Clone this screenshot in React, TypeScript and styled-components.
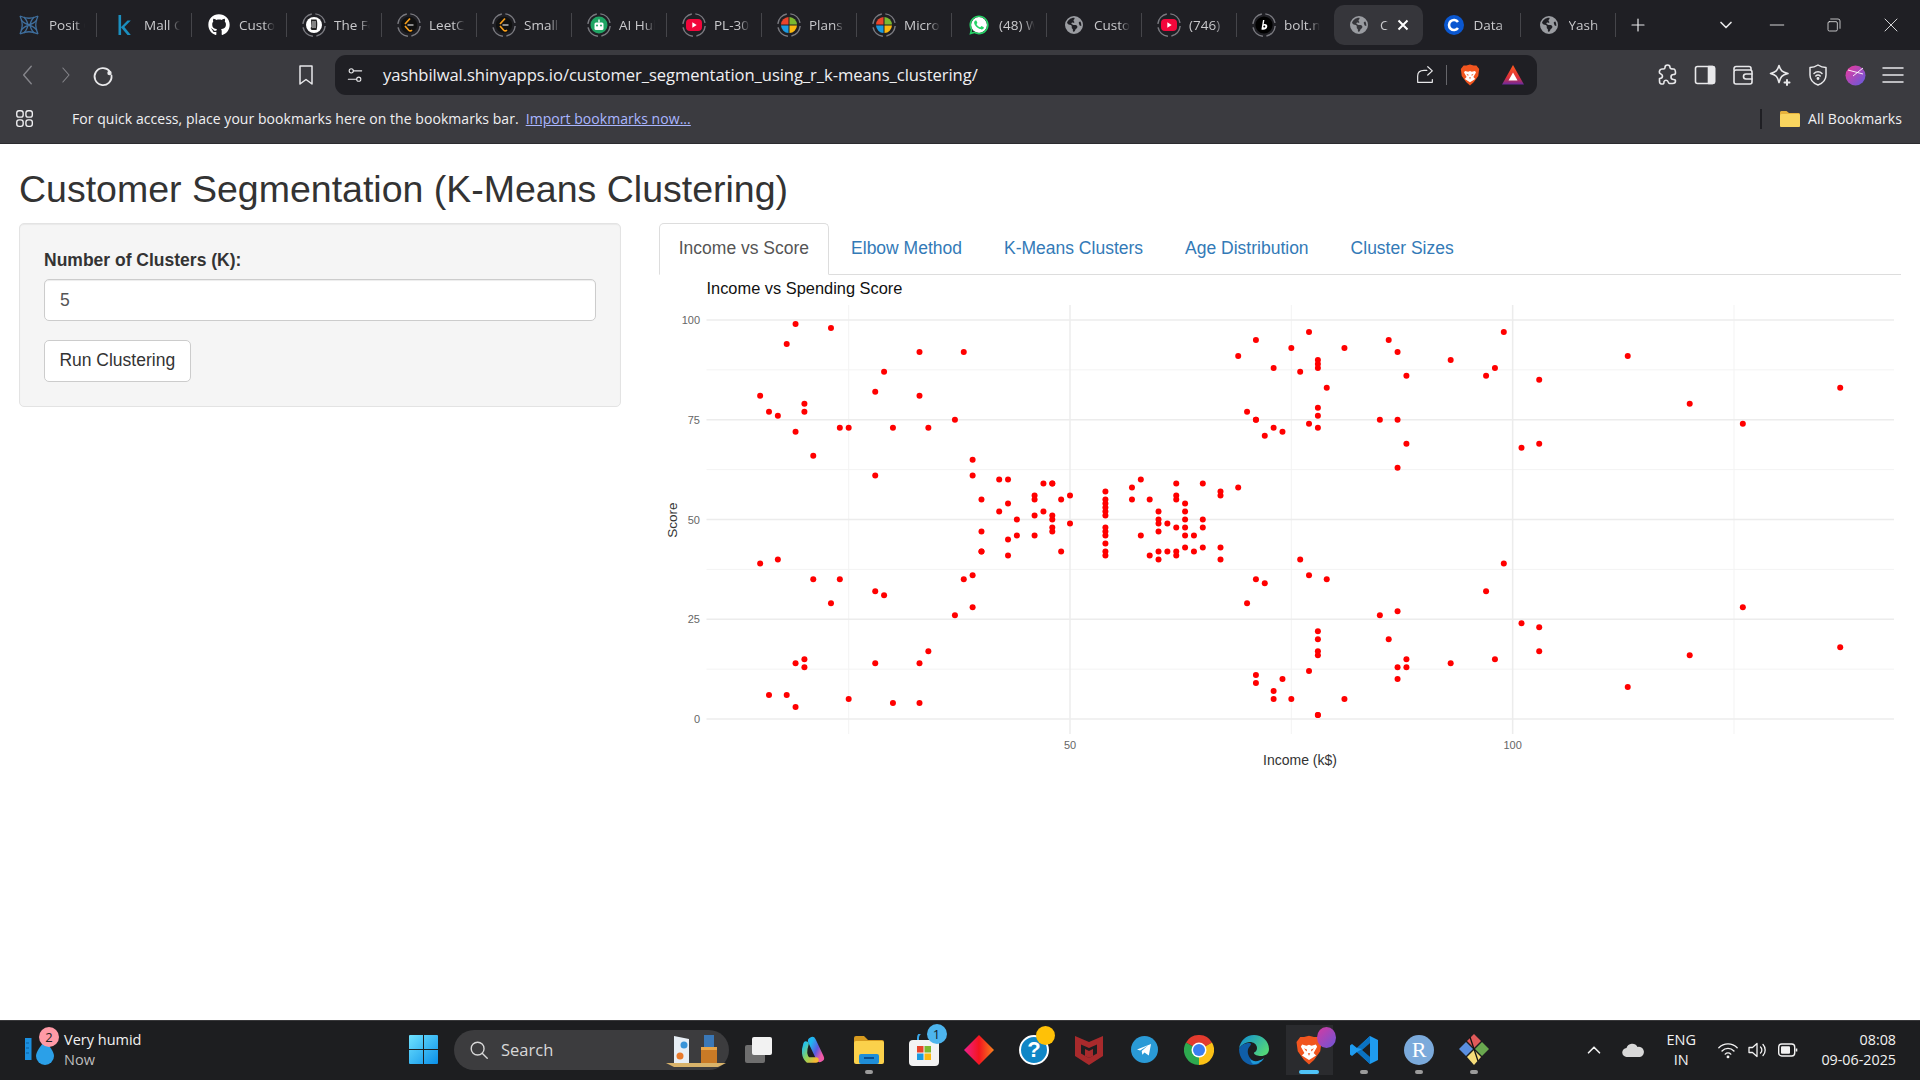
import React from 'react';
import styled, { createGlobalStyle } from 'styled-components';
import { FaGithub } from 'react-icons/fa';
import { FaEarthAmericas } from 'react-icons/fa6';

const GlobalStyle = createGlobalStyle`
  html, body { margin: 0; padding: 0; background: #fff; }
  * { box-sizing: border-box; }
`;

const UI_FONT = `"Open Sans", "Noto Sans", sans-serif`;
const PAGE_FONT = `"Liberation Sans", Arial, sans-serif`;

const Screen = styled.div`
  width: 1920px;
  height: 1080px;
  display: flex;
  flex-direction: column;
  overflow: hidden;
  font-family: ${PAGE_FONT};
`;

/* ---- browser chrome ---- */

const TabStrip = styled.div`
  height: 50px;
  flex: none;
  display: flex;
  align-items: center;
  padding-left: 1.5px;
  background: #1f1f24;
  font-family: ${UI_FONT};
  font-size: 13.5px;
  color: #c9c9cc;
`;

const Tab = styled.div<{ $noSep?: boolean }>`
  width: 95px;
  height: 24px;
  flex: none;
  display: flex;
  align-items: center;
  gap: 8px;
  padding-left: 15.5px;
  border-right: 1px solid ${(p) => (p.$noSep ? 'transparent' : '#45454a')};
`;

const ActiveTab = styled.div`
  width: 89px;
  height: 40px;
  flex: none;
  display: flex;
  align-items: center;
  gap: 9px;
  margin: 0 3px 0 2.5px;
  padding-left: 13px;
  border-radius: 10px;
  background: #36363b;
`;

const TabTitle = styled.span<{ $width?: number }>`
  width: ${(p) => p.$width ?? 36}px;
  overflow: hidden;
  white-space: nowrap;
  -webkit-mask-image: linear-gradient(to right, #000 70%, transparent 100%);
  mask-image: linear-gradient(to right, #000 70%, transparent 100%);
`;

const Fav = styled.span`
  width: 24px;
  height: 24px;
  flex: none;
  display: flex;
  align-items: center;
  justify-content: center;
`;

const StripControls = styled.div`
  flex: 1;
  display: flex;
  align-items: center;
  color: #e8e8ea;
`;

const PlusSlot = styled.div`
  width: 44px;
  display: flex;
  justify-content: center;
`;

const ChevronSlot = styled.div`
  margin-left: 44px;
  width: 44px;
  display: flex;
  justify-content: center;
`;

const WinButton = styled.div`
  width: 57px;
  display: flex;
  justify-content: center;
`;

const Toolbar = styled.div`
  height: 50px;
  flex: none;
  display: flex;
  align-items: center;
  background: #3b3b40;
  color: #e8e8ea;
`;

const NavGroup = styled.div`
  width: 335px;
  flex: none;
  display: flex;
  align-items: center;
  padding-right: 9px;
`;

const NavIcon = styled.span<{ $w: number; $dim?: boolean }>`
  width: ${(p) => p.$w}px;
  flex: none;
  display: flex;
  justify-content: center;
  color: ${(p) => (p.$dim ? '#85858a' : '#e8e8ea')};
`;

const BookmarkSlot = styled(NavIcon)`
  margin-left: auto;
`;

const AddressBar = styled.div`
  width: 1202px;
  height: 40px;
  flex: none;
  display: flex;
  align-items: center;
  border-radius: 11px;
  background: #1f1f24;
  padding-left: 10px;
`;

const Url = styled.span`
  margin-left: 18px;
  padding-bottom: 2px;
  flex: 1;
  font-family: ${UI_FONT};
  font-size: 16.6px;
  letter-spacing: -0.07px;
  color: #f0f0f2;
  white-space: nowrap;
`;

const AddrSep = styled.span`
  width: 1px;
  height: 20px;
  margin: 0 12px 0 10px;
  background: #66666b;
`;

const BatSlot = styled(NavIcon)`
  margin-left: 8px;
`;

const ToolIcons = styled.div`
  margin-left: 118px;
  display: flex;
  align-items: center;
  gap: 12.5px;
`;

const ToolIcon = styled.span`
  width: 25px;
  height: 25px;
  display: flex;
  align-items: center;
  justify-content: center;
`;

const BookmarksBar = styled.div`
  height: 44px;
  flex: none;
  display: flex;
  align-items: center;
  padding: 0 18px 6px 14px;
  background: #3b3b40;
  border-bottom: 1px solid #2b2b2f;
  font-family: ${UI_FONT};
  font-size: 14px;
  letter-spacing: 0.05px;
  color: #f0f0f2;
`;

const BookmarkHint = styled.span`
  margin-left: 36px;
`;

const ImportLink = styled.a`
  margin-left: 7px;
  color: #aab6ff;
  text-decoration: underline;
`;

const AllBookmarks = styled.div`
  margin-left: auto;
  display: flex;
  align-items: center;
  gap: 8px;
`;

const BarDivider = styled.span`
  width: 2px;
  height: 20px;
  margin-right: 10px;
  background: #1f1f24;
`;

/* ---- shiny page ---- */

const Page = styled.main`
  flex: 1;
  padding: 0 19px;
  background: #fff;
  color: #333;
  font-size: 17.5px;
  line-height: 25px;
`;

const Heading = styled.h2`
  margin: 25px 0 12.5px;
  font-size: 37.5px;
  font-weight: 500;
  line-height: 41.25px;
`;

const Columns = styled.div`
  display: grid;
  grid-template-columns: 602px 1242px;
  column-gap: 38px;
`;

const Well = styled.div`
  align-self: start;
  padding: 24px;
  background: #f5f5f5;
  border: 1px solid #e3e3e3;
  border-radius: 5px;
  box-shadow: inset 0 1px 1px rgba(0, 0, 0, 0.05);
`;

const FieldLabel = styled.label`
  display: block;
  margin-bottom: 6px;
  font-weight: 700;
`;

const NumberInput = styled.div`
  height: 42.5px;
  margin-bottom: 18.75px;
  padding: 0 15px;
  display: flex;
  align-items: center;
  background: #fff;
  border: 1px solid #ccc;
  border-radius: 5px;
  box-shadow: inset 0 1px 1px rgba(0, 0, 0, 0.075);
  color: #555;
`;

const RunButton = styled.button`
  display: block;
  height: 41.5px;
  width: 146.5px;
  padding: 0;
  background: #fff;
  border: 1px solid #ccc;
  border-radius: 5px;
  color: #333;
  font: inherit;
`;

const TabNav = styled.div`
  display: flex;
  height: 52px;
  border-bottom: 1px solid #ddd;
`;

const TabLink = styled.a<{ $active?: boolean }>`
  height: 52px;
  margin-right: 2.5px;
  padding: 12px 18.75px;
  border: 1px solid ${(p) => (p.$active ? '#ddd' : 'transparent')};
  border-bottom-color: ${(p) => (p.$active ? '#fff' : 'transparent')};
  border-radius: 5px 5px 0 0;
  background: ${(p) => (p.$active ? '#fff' : 'transparent')};
  color: ${(p) => (p.$active ? '#555' : '#337ab7')};
`;

const PlotSvg = styled.svg`
  display: block;
  width: 1242px;
  height: 500px;
  font-family: ${PAGE_FONT};
`;

/* ---- taskbar ---- */

const Taskbar = styled.footer`
  height: 60px;
  flex: none;
  display: flex;
  align-items: center;
  padding-bottom: 2px;
  background: #1d1e20;
  border-top: 1px solid #38383a;
  font-family: ${UI_FONT};
  color: #f2f2f2;
`;

const Weather = styled.div`
  width: 395.5px;
  flex: none;
  display: flex;
  align-items: center;
  padding-left: 25px;
`;

const WeatherIcon = styled.div`
  position: relative;
  width: 39px;
  height: 36px;
  flex: none;
`;

const WeatherBadge = styled.span`
  position: absolute;
  left: 14px;
  top: -5px;
  width: 20px;
  height: 20px;
  border-radius: 50%;
  background: #ff9aa6;
  color: #222;
  font-size: 13px;
  line-height: 20px;
  text-align: center;
`;

const WeatherText = styled.div`
  font-size: 14.5px;
  line-height: 20px;
`;

const MutedLine = styled.div`
  color: #bdbdbd;
`;

const Slot = styled.div<{ $active?: boolean }>`
  position: relative;
  width: 55px;
  height: 50px;
  flex: none;
  display: flex;
  align-items: center;
  justify-content: center;
  background: ${(p) => (p.$active ? 'linear-gradient(#2a2b2e, #2a2b2e) center / 47px 100% no-repeat' : 'transparent')};
`;

const RunDot = styled.span<{ $active?: boolean }>`
  position: absolute;
  left: 50%;
  bottom: 1px;
  width: ${(p) => (p.$active ? 20 : 8)}px;
  height: 4px;
  margin-left: ${(p) => (p.$active ? -10 : -4)}px;
  border-radius: 2px;
  background: ${(p) => (p.$active ? '#4fc3f7' : '#9b9b9b')};
`;

const CountBadge = styled.span`
  position: absolute;
  top: -1px;
  right: 5px;
  width: 20px;
  height: 20px;
  border-radius: 50%;
  background: #4db5ee;
  color: #12222c;
  font-size: 13px;
  line-height: 20px;
  text-align: center;
`;

const HelpDisc = styled.span`
  width: 30px;
  height: 30px;
  display: flex;
  align-items: center;
  justify-content: center;
  border-radius: 50%;
  background: #0f86c6;
  border: 2px solid #fff;
  color: #fff;
  font-family: ${PAGE_FONT};
  font-size: 22px;
  font-weight: 700;
`;

const HelpDot = styled.span`
  position: absolute;
  top: 1px;
  right: 7px;
  width: 19px;
  height: 19px;
  border-radius: 50%;
  background: #ffc107;
`;

const ProfileDot = styled.span`
  position: absolute;
  top: 2px;
  right: 1px;
  width: 19px;
  height: 21px;
  border-radius: 50%;
  background: linear-gradient(135deg, #d63aa0, #6a55d8);
`;

const RDisc = styled.span`
  width: 30px;
  height: 30px;
  display: flex;
  align-items: center;
  justify-content: center;
  border-radius: 50%;
  background: #7baadb;
  color: #fff;
  font-family: "Liberation Serif", serif;
  font-size: 22px;
`;

const SearchPill = styled.div`
  width: 274.5px;
  height: 40px;
  flex: none;
  margin: 0 3px 0 3.5px;
  padding: 0 3px 0 14px;
  display: flex;
  align-items: center;
  gap: 11px;
  border-radius: 20px;
  background: #3c3c3e;
  font-size: 16.5px;
  color: #d8d8d8;
`;

const SearchArt = styled.span`
  margin-left: auto;
  display: flex;
`;

const Tray = styled.div`
  margin-left: auto;
  padding-right: 24px;
  display: flex;
  align-items: center;
`;

const TrayIcon = styled.span<{ $w: number }>`
  width: ${(p) => p.$w}px;
  flex: none;
  display: flex;
  justify-content: center;
`;

const Lang = styled.div`
  width: 69.5px;
  flex: none;
  text-align: center;
  font-size: 14.5px;
  line-height: 20px;
`;

const Clock = styled.div`
  width: 96px;
  text-align: right;
  font-size: 14.3px;
  line-height: 20px;
`;

/* ---- data (Mall Customers) ---- */

const INCOME = [
  15,15,16,16,17,17,18,18,19,19,19,19,20,20,20,20,21,21,23,23,24,24,25,25,28,28,28,28,29,29,30,30,33,33,33,33,34,34,37,37,
  38,38,39,39,39,39,40,40,40,40,42,42,43,43,43,43,44,44,46,46,46,46,47,47,48,48,48,48,48,48,49,49,50,50,54,54,54,54,54,54,
  54,54,54,54,54,54,57,57,58,58,59,59,60,60,60,60,60,60,61,61,62,62,62,62,62,62,63,63,63,63,63,63,64,64,65,65,65,65,67,67,
  67,67,69,69,70,70,71,71,71,71,71,71,72,72,73,73,73,73,74,74,75,75,76,76,77,77,77,77,78,78,78,78,78,78,78,78,78,78,78,78,
  79,79,81,81,85,85,86,86,87,87,87,87,87,87,88,88,88,88,93,93,97,97,98,98,99,99,101,101,103,103,103,103,113,113,120,120,126,126,137,137,
];

const SCORE = [
  39,81,6,77,40,76,6,94,3,72,14,99,15,77,13,79,35,66,29,98,35,73,5,73,14,82,32,61,31,87,4,73,4,92,14,81,17,73,26,75,
  35,92,36,61,28,65,55,47,42,42,52,60,54,60,45,41,50,46,51,46,56,55,52,59,51,59,50,48,59,47,55,42,49,56,47,54,53,48,52,42,
  51,55,41,44,57,46,58,55,60,46,55,41,49,40,42,52,47,50,42,49,41,48,59,55,56,42,50,46,43,48,52,54,42,46,48,50,43,59,43,57,
  56,40,58,91,29,77,35,95,11,75,9,75,34,71,5,88,7,73,10,72,5,93,40,87,12,97,36,74,22,90,17,88,20,76,16,89,1,78,1,73,
  35,83,5,93,26,75,20,95,27,63,13,75,10,92,13,86,15,69,14,90,32,86,15,88,39,97,24,68,17,85,23,69,8,91,16,79,28,74,18,83,
];

const sx = (v: number) => 411 + (v - 50) * 8.853;
const sy = (s: number) => 45 + (100 - s) * 3.99;

const PANEL = { left: 47.5, right: 1235, top: 30, bottom: 459 };

const Plot = () => (
  <PlotSvg viewBox="0 0 1242 500">
    {[12.5, 37.5, 62.5, 87.5].map((s) => (
      <line key={s} x1={PANEL.left} x2={PANEL.right} y1={sy(s)} y2={sy(s)} stroke="#f3f3f3" strokeWidth="1" />
    ))}
    {[25, 75, 125].map((v) => (
      <line key={v} x1={sx(v)} x2={sx(v)} y1={PANEL.top} y2={PANEL.bottom} stroke="#f3f3f3" strokeWidth="1" />
    ))}
    {[0, 25, 50, 75, 100].map((s) => (
      <line key={s} x1={PANEL.left} x2={PANEL.right} y1={sy(s)} y2={sy(s)} stroke="#ececec" strokeWidth="1.5" />
    ))}
    {[50, 100].map((v) => (
      <line key={v} x1={sx(v)} x2={sx(v)} y1={PANEL.top} y2={PANEL.bottom} stroke="#ececec" strokeWidth="1.5" />
    ))}
    {INCOME.map((v, i) => (
      <circle key={i} cx={sx(v)} cy={sy(SCORE[i])} r="3" fill="#ff0000" />
    ))}
    {[0, 25, 50, 75, 100].map((s) => (
      <text key={s} x="41" y={sy(s) + 4} textAnchor="end" fontSize="11" fill="#666">{s}</text>
    ))}
    {[50, 100].map((v) => (
      <text key={v} x={sx(v)} y="474" textAnchor="middle" fontSize="11" fill="#666">{v}</text>
    ))}
    <text x="47.5" y="18.5" fontSize="16.4" fill="#111">Income vs Spending Score</text>
    <text x="641" y="489.5" textAnchor="middle" fontSize="14" fill="#333">Income (k$)</text>
    <text transform="translate(17.5 245) rotate(-90)" textAnchor="middle" fontSize="13.5" fill="#333">Score</text>
  </PlotSvg>
);

/* ---- favicons ---- */

const Ring = () => <circle cx="12" cy="12" r="11.2" fill="none" stroke="#7a7a80" strokeWidth="1.5" strokeDasharray="14 3.6" strokeDashoffset="-1" />;

const RingFav = ({ children }: { children: React.ReactNode }) => (
  <svg width="24" height="24" viewBox="0 0 24 24"><Ring />{children}</svg>
);

const PositIcon = () => (
  <svg width="22" height="22" viewBox="0 0 22 22" fill="none" stroke="#3f6f9e" strokeWidth="1.3">
    <path d="M2 2c7 3 11 3 18 0M2 20c7-3 11-3 18 0M2 2c3 6 3 12 0 18M20 2c-3 6-3 12 0 18" />
    <path d="M3 6c6 6 10 6 16 0M3 16c6-6 10-6 16 0M6 3c5 6 5 10 0 16M16 3c-5 6-5 10 0 16" />
  </svg>
);

const KaggleIcon = () => (
  <svg width="14" height="20" viewBox="0 0 14 20">
    <path d="M1.5 0h2.6v12L10.500 5.500h3.300L7.400 12l6.400 8h-3.300L4.100 12.500V20H1.500z" fill="#1b8fbf" />
  </svg>
);

const ForageIcon = () => (
  <RingFav>
    <circle cx="12" cy="12" r="8" fill="#fff" />
    <path d="M9 6.5h5.5c1 2 1 7 0 10.5H9.5L8.5 15l1-1z" fill="#222" />
    <path d="M11 8v7M13 8v7" stroke="#fff" strokeWidth="0.9" />
  </RingFav>
);

const LeetIcon = () => (
  <RingFav>
    <circle cx="12" cy="12" r="8.2" fill="#111" />
    <path d="M13 5.5 8 11" stroke="#f89f1b" strokeWidth="1.7" fill="none" />
    <path d="M8 13l3.5 4c1 1 2.5 1 3.5 0" stroke="#f89f1b" strokeWidth="1.7" fill="none" />
    <path d="M10.5 12h6" stroke="#b3b3b3" strokeWidth="1.5" />
  </RingFav>
);

const RobotIcon = () => (
  <RingFav>
    <circle cx="12" cy="12" r="8.5" fill="#1fa463" />
    <rect x="7.5" y="9.5" width="9" height="7.5" rx="1.5" fill="#fff" />
    <rect x="11.3" y="6.5" width="1.4" height="3" fill="#fff" />
    <circle cx="10" cy="12.5" r="1" fill="#1fa463" />
    <circle cx="14" cy="12.5" r="1" fill="#1fa463" />
  </RingFav>
);

const TubeIcon = () => (
  <RingFav>
    <rect x="4" y="6" width="16" height="12" rx="4" fill="#f2073b" />
    <path d="M10.3 9.3v5.4l4.4-2.7z" fill="#fff" />
  </RingFav>
);

const PlannerIcon = () => (
  <RingFav>
    <path d="M11.5 11.5V4a8 8 0 0 0-7.500 7.500z" fill="#e8452c" />
    <path d="M12.500 11.500V4a8 8 0 0 1 7.500 7.500z" fill="#7cb82f" />
    <path d="M11.500 12.500H4a8 8 0 0 0 7.500 7.500z" fill="#1a9ae0" />
    <path d="M12.500 12.500H20a8 8 0 0 1-7.500 7.500z" fill="#fbb80f" />
  </RingFav>
);

const BoltIcon = () => (
  <RingFav>
    <circle cx="12" cy="12" r="8.6" fill="#000" />
    <path d="M11 7l-1.6 9.5c2.8.8 5.6-.4 5.9-3 .2-2-1.4-3-3.6-2.3L12.4 7z" fill="#fff" />
    <circle cx="12.3" cy="13.5" r="1" fill="#000" />
  </RingFav>
);

const WhatsIcon = () => (
  <svg width="22" height="22" viewBox="0 0 448 512">
    <circle cx="224" cy="256" r="185" fill="#fff" />
    <path fill="#25d366" d="M380.9 97.1C339 55.1 283.2 32 223.9 32c-122.4 0-222 99.6-222 222 0 39.1 10.2 77.3 29.6 111L0 480l117.7-30.9c32.4 17.7 68.9 27 106.1 27h.1c122.3 0 224.1-99.6 224.1-222 0-59.3-25.2-115-67.1-157zm-157 341.6c-33.2 0-65.7-8.9-94-25.7l-6.7-4-69.8 18.3L72 359.2l-4.4-7c-18.5-29.4-28.2-63.3-28.2-98.2 0-101.7 82.8-184.5 184.6-184.5 49.3 0 95.6 19.2 130.4 54.1 34.8 34.9 56.2 81.2 56.1 130.5 0 101.8-84.9 184.6-186.6 184.6zm101.2-138.2c-5.500-2.800-32.800-16.200-37.900-18-5.100-1.900-8.800-2.800-12.500 2.800-3.700 5.600-14.300 18-17.600 21.800-3.200 3.700-6.500 4.200-12 1.400-32.600-16.300-54-29.100-75.500-66-5.700-9.800 5.700-9.100 16.300-30.300 1.800-3.700.9-6.900-.5-9.700-1.400-2.800-12.500-30.100-17.100-41.200-4.500-10.800-9.100-9.300-12.500-9.500-3.200-.2-6.900-.2-10.600-.2-3.700 0-9.700 1.400-14.800 6.900-5.100 5.600-19.400 19-19.400 46.300 0 27.300 19.900 53.700 22.600 57.400 2.800 3.700 39.100 59.700 94.800 83.800 35.200 15.200 49 16.500 66.600 13.900 10.700-1.600 32.800-13.400 37.400-26.400 4.600-13 4.600-24.100 3.200-26.400-1.300-2.500-5-3.900-10.500-6.600z" />
  </svg>
);

const CourseraIcon = () => (
  <svg width="20" height="20" viewBox="0 0 20 20">
    <circle cx="10" cy="10" r="10" fill="#0a57d0" />
    <path d="M14 7a5 5 0 1 0 0 6" fill="none" stroke="#fff" strokeWidth="2.6" />
  </svg>
);

const Globe = () => <FaEarthAmericas size={18} color="#9a9ca1" />;

const TABS: { title: string; icon: React.ReactNode; noSep?: boolean }[] = [
  { title: 'Posit Cloud', icon: <PositIcon /> },
  { title: 'Mall Customers', icon: <KaggleIcon /> },
  { title: 'Customer', icon: <FaGithub size={22} color="#fff" /> },
  { title: 'The Forage', icon: <ForageIcon /> },
  { title: 'LeetCode', icon: <LeetIcon /> },
  { title: 'Small', icon: <LeetIcon /> },
  { title: 'AI Hub', icon: <RobotIcon /> },
  { title: 'PL-300', icon: <TubeIcon /> },
  { title: 'Plans', icon: <PlannerIcon /> },
  { title: 'Microsoft', icon: <PlannerIcon /> },
  { title: '(48) WhatsApp', icon: <WhatsIcon /> },
  { title: 'Customer', icon: <Globe /> },
  { title: '(746)', icon: <TubeIcon /> },
  { title: 'bolt.new', icon: <BoltIcon />, noSep: true },
];

/* ---- toolbar icons ---- */

type IconProps = { children: React.ReactNode; size?: number; sw?: number };
const Line = ({ children, size = 24, sw = 1.6 }: IconProps) => (
  <svg width={size} height={size} viewBox="0 0 24 24" fill="none" stroke="currentColor" strokeWidth={sw} strokeLinecap="round" strokeLinejoin="round">
    {children}
  </svg>
);

const SmallX = () => (
  <svg width="12" height="12" viewBox="0 0 12 12" stroke="#fff" strokeWidth="2">
    <path d="M1.5 1.5l9 9M10.5 1.5l-9 9" />
  </svg>
);

const BraveLogo = ({ size }: { size: number }) => (
  <svg width={size} height={size} viewBox="0 0 24 24">
    <path d="M12 .5l4 1h3l3 4-1 7.500-5 7-4 3.500-4-3.500-5-7-1-7.500 3-4h3z" fill="#f1551f" />
    <path d="M6.500 7.500l3.500 1 2-.8 2 .8 3.500-1 1 1.800-2.800 5 2 2L12 20l-5.700-3.700 2-2-2.800-5z" fill="#fff" />
    <path d="M8 10.500l2.500 1.200-.6 1.500zM16 10.500l-2.500 1.200.6 1.500zM11 14.500h2l-1 2z" fill="#f1551f" />
  </svg>
);

const BatTriangle = () => (
  <svg width="24" height="22" viewBox="0 0 24 22">
    <defs>
      <linearGradient id="bat" x1="0" y1="0" x2="0" y2="1">
        <stop offset="0" stopColor="#ff5a1f" />
        <stop offset="0.65" stopColor="#dc2f3c" />
        <stop offset="1" stopColor="#6b2aa0" />
      </linearGradient>
    </defs>
    <path d="M12 1 1 20.500h22z" fill="url(#bat)" />
    <path d="M12 8.500l-4.500 8h9z" fill="#fff" />
  </svg>
);

const Avatar = () => (
  <svg width="21" height="21" viewBox="0 0 21 21">
    <defs>
      <linearGradient id="av" x1="0" y1="0" x2="1" y2="1">
        <stop offset="0" stopColor="#f0389a" />
        <stop offset="1" stopColor="#5e5ce0" />
      </linearGradient>
    </defs>
    <circle cx="10.5" cy="10.5" r="10" fill="url(#av)" />
    <path d="M3 5l15 4M18 3 8 11" stroke="#fff" strokeWidth="0.9" />
  </svg>
);

const Folder = () => (
  <svg width="20" height="16" viewBox="0 0 20 16">
    <path d="M0 1.5C0 .7.7 0 1.500 0h5L9 2h9.500c.8 0 1.500.7 1.500 1.500v11c0 .8-.7 1.500-1.500 1.500h-17C.7 16 0 15.300 0 14.500z" fill="#e6b23c" />
    <rect y="3" width="20" height="13" rx="1.500" fill="#f9d55f" />
  </svg>
);

/* ---- taskbar icons ---- */

const WinLogo = () => (
  <svg width="29" height="29" viewBox="0 0 29 29">
    <defs>
      <linearGradient id="win" x1="0" y1="0" x2="1" y2="1">
        <stop offset="0" stopColor="#6fe3ff" />
        <stop offset="1" stopColor="#0a8fe8" />
      </linearGradient>
    </defs>
    <path d="M0 1a1 1 0 0 1 1-1h13v14H0zM15 0h13a1 1 0 0 1 1 1v13H15zM0 15h14v14H1a1 1 0 0 1-1-1zM15 15h14v13a1 1 0 0 1-1 1H15z" fill="url(#win)" />
  </svg>
);

const TaskView = () => (
  <svg width="30" height="30" viewBox="0 0 30 30">
    <rect x="1" y="10" width="20" height="18" rx="2" fill="#6e6e6e" />
    <rect x="8" y="2" width="20" height="18" rx="2" fill="#f2f2f2" />
  </svg>
);

const Copilot = () => (
  <svg width="30" height="30" viewBox="0 0 30 30" fill="none" strokeLinecap="round">
    <defs>
      <linearGradient id="co1" x1="0" y1="0" x2="1" y2="1">
        <stop offset="0" stopColor="#1fb6f0" />
        <stop offset="0.55" stopColor="#5b5be0" />
        <stop offset="1" stopColor="#ef5aa8" />
      </linearGradient>
      <linearGradient id="co2" x1="0" y1="0" x2="1" y2="1">
        <stop offset="0" stopColor="#25c2e8" />
        <stop offset="0.5" stopColor="#8fd45a" />
        <stop offset="1" stopColor="#f7b733" />
      </linearGradient>
    </defs>
    <path d="M13 6l8 17" stroke="url(#co1)" strokeWidth="8" />
    <path d="M7 9c-2 6-2 13 2 16h8" stroke="url(#co2)" strokeWidth="5.500" />
  </svg>
);

const ExplorerIcon = () => (
  <svg width="30" height="28" viewBox="0 0 30 28">
    <path d="M0 2a2 2 0 0 1 2-2h8l4 4h14a2 2 0 0 1 2 2v8H0z" fill="#d79b1f" />
    <rect y="5" width="30" height="23" rx="2" fill="#fbd14b" />
    <rect x="5" y="18" width="20" height="10" rx="2" fill="#1f8ed8" />
    <rect x="10" y="21" width="10" height="2" fill="#0b4f8f" />
  </svg>
);

const StoreIcon = () => (
  <svg width="30" height="32" viewBox="0 0 30 32">
    <path d="M9 8V4a6 6 0 0 1 12 0v4" fill="none" stroke="#3aa8e8" strokeWidth="2" />
    <rect y="6" width="30" height="26" rx="4" fill="#f3f3f3" />
    <rect x="8" y="12" width="6.500" height="6.500" fill="#e8452c" />
    <rect x="15.500" y="12" width="6.500" height="6.500" fill="#7cb82f" />
    <rect x="8" y="19.500" width="6.500" height="6.500" fill="#1a9ae0" />
    <rect x="15.500" y="19.500" width="6.500" height="6.500" fill="#fbb80f" />
  </svg>
);

const DiamondIcon = () => (
  <svg width="30" height="30" viewBox="0 0 30 30">
    <defs>
      <linearGradient id="dia" x1="0" y1="0" x2="1" y2="0">
        <stop offset="0" stopColor="#ee1f8e" />
        <stop offset="0.5" stopColor="#f5151f" />
        <stop offset="1" stopColor="#f7811d" />
      </linearGradient>
    </defs>
    <path d="M15 0l15 15-15 15L0 15z" fill="url(#dia)" />
  </svg>
);

const McAfee = () => (
  <svg width="28" height="30" viewBox="0 0 28 30">
    <path d="M0 1l14 6 14-6v20L14 30 0 21z" fill="#a82a2c" />
    <path d="M6 9.500l8 3.500 8-3.500v9L14 23l-8-4.500z" fill="#1d1e20" />
    <path d="M10 14l4 2 4-2v7l-4 2-4-2z" fill="#a82a2c" />
  </svg>
);

const TelegramIcon = () => (
  <svg width="27" height="27" viewBox="0 0 27 27">
    <circle cx="13.500" cy="13.500" r="13.500" fill="#2a9ad6" />
    <path d="M6 13.500l14-5.500-2.200 11.500-4.300-3-2.200 2.200-.6-3.800 6.300-5.400-7.900 4.900z" fill="#fff" />
  </svg>
);

const ChromeIcon = () => (
  <svg width="30" height="30" viewBox="0 0 30 30">
    <path d="M15 15 2 7.500A15 15 0 0 1 28 7.500z" fill="#e33b2e" />
    <path d="M15 15 28 7.500A15 15 0 0 1 15 30z" fill="#fbc116" />
    <path d="M15 15V30A15 15 0 0 1 2 7.500z" fill="#2da94f" />
    <circle cx="15" cy="15" r="7.500" fill="#fff" />
    <circle cx="15" cy="15" r="6" fill="#3a7ff0" />
  </svg>
);

const EdgeIcon = () => (
  <svg width="30" height="30" viewBox="0 0 30 30">
    <defs>
      <linearGradient id="edge" x1="0" y1="0" x2="1" y2="0.6">
        <stop offset="0" stopColor="#0d8bd9" />
        <stop offset="1" stopColor="#52d67a" />
      </linearGradient>
    </defs>
    <path d="M15 0c8 0 15 6 15 14 0 5-4 7-8 7-3 0-7-1-7-3 0-1 3-1 3-5 0-4-4-6-7-6C6 7 1 11 0 14 1 6 7 0 15 0z" fill="url(#edge)" />
    <path d="M0 14c2-4 6-6 10-6 3 0 2 2 1 3-3 3-3 8 0 12 2 3 6 5 10 5-2 1-4 2-7 2C6 30 0 23 0 14z" fill="#0f5ea8" />
    <path d="M11 24c3 3 9 3 14-1-2 4-6 6-10 6-2 0-3-2-4-5z" fill="#1f9ad8" />
  </svg>
);

const VsCode = () => (
  <svg width="30" height="30" viewBox="0 0 30 30">
    <path d="M21 1 29 5v20l-8 4L8 17l-5 4-2-1.500v-9L3 9l5 4z" fill="#1f9cf0" />
    <path d="M21 1v28L8 17l5-3-5-1 13-12zM21 8l-8 7 8 7z" fill="#0a72c2" />
    <path d="M21 8v14l-8-7z" fill="#1d1e20" />
  </svg>
);

const GitExt = () => (
  <svg width="32" height="32" viewBox="0 0 32 32">
    <path d="M16 0l7 7-7 7-7-7z" fill="#e05a5a" />
    <path d="M8 8l7 7-7 7-7-7z" fill="#5a8fe0" />
    <path d="M24 8l7 7-7 7-7-7z" fill="#6aa84f" />
    <path d="M16 16l7 7-7 8-7-8z" fill="#f5dc7a" />
    <path d="M12 3l8 24" stroke="#111" strokeWidth="1.300" />
  </svg>
);

const SearchArtwork = () => (
  <svg width="60" height="34" viewBox="0 0 60 34">
    <path d="M0 30h60l-8 4H8z" fill="#d9b36a" />
    <path d="M8 3l15 3v24H8z" fill="#e7eef5" />
    <circle cx="18" cy="12" r="3.500" fill="#3a94d8" />
    <circle cx="14" cy="23" r="3.500" fill="#e8792b" />
    <rect x="35" y="14" width="16" height="16" fill="#c97a26" />
    <rect x="35" y="14" width="16" height="3" fill="#e8a64a" />
    <rect x="38" y="2" width="10" height="12" fill="#3a78b8" />
  </svg>
);

const WaterDrop = () => (
  <svg width="39" height="36" viewBox="0 0 39 36">
    <rect y="6" width="6.500" height="22" fill="#1b90e0" />
    <path d="M1 11h3M1 16h3M1 21h3" stroke="#0c5f9e" strokeWidth="1" />
    <path d="M20 9c-4 4-9 11-9 15a9 9 0 0 0 18 0c0-4-5-11-9-15z" fill="#2ba0e8" />
  </svg>
);

const App = () => (
  <>
    <GlobalStyle />
    <Screen>
      <TabStrip>
        {TABS.map((t, i) => (
          <Tab key={i} $noSep={t.noSep}>
            <Fav>{t.icon}</Fav>
            <TabTitle>{t.title}</TabTitle>
          </Tab>
        ))}
        <ActiveTab>
          <Fav><Globe /></Fav>
          <TabTitle $width={8}>Cust</TabTitle>
          <SmallX />
        </ActiveTab>
        <Tab>
          <Fav><CourseraIcon /></Fav>
          <TabTitle>Data</TabTitle>
        </Tab>
        <Tab>
          <Fav><Globe /></Fav>
          <TabTitle>Yash</TabTitle>
        </Tab>
        <StripControls>
          <PlusSlot>
            <Line size={18}><path d="M12 4v16M4 12h16" /></Line>
          </PlusSlot>
          <ChevronSlot>
            <Line size={20} sw={2}><path d="M6 9l6 6 6-6" /></Line>
          </ChevronSlot>
          <WinButton>
            <Line size={18} sw={1.2}><path d="M3 12h18" /></Line>
          </WinButton>
          <WinButton>
            <Line size={16} sw={1.2}><rect x="3" y="7" width="14" height="14" rx="2" /><path d="M7 3h11a3 3 0 0 1 3 3v11" /></Line>
          </WinButton>
          <WinButton>
            <Line size={18} sw={1.2}><path d="M4 4l16 16M20 4 4 20" /></Line>
          </WinButton>
        </StripControls>
      </TabStrip>

      <Toolbar>
        <NavGroup>
          <NavIcon $w={55} $dim>
            <Line size={26} sw={1.3}><path d="M15 4l-7 8 7 8" /></Line>
          </NavIcon>
          <NavIcon $w={21} $dim>
            <Line size={26} sw={1.3}><path d="M9 4l7 8-7 8" /></Line>
          </NavIcon>
          <NavIcon $w={53}>
            <Line size={24} sw={1.8}><path d="M18.500 8A8.500 8.500 0 1 0 20.500 12.500" /><circle cx="18.500" cy="10" r="1.300" fill="currentColor" /></Line>
          </NavIcon>
          <BookmarkSlot $w={40}>
            <Line size={24} sw={1.5}><path d="M6 3h12v18l-6-4.500L6 21z" /></Line>
          </BookmarkSlot>
        </NavGroup>
        <AddressBar>
          <Line size={20} sw={1.3}>
            <circle cx="7.500" cy="7" r="2.500" /><path d="M10 7h10M4 17h10" /><circle cx="16.500" cy="17" r="2.500" />
          </Line>
          <Url>yashbilwal.shinyapps.io/customer_segmentation_using_r_k-means_clustering/</Url>
          <Line size={22} sw={1.3}><path d="M20 17v3H4v-7c0-4 3-6 7-6h3M15 3l5 4.500-5 4.500" /></Line>
          <AddrSep />
          <BraveLogo size={22} />
          <BatSlot $w={48}><BatTriangle /></BatSlot>
        </AddressBar>
        <ToolIcons>
          <ToolIcon>
            <Line sw={1.600}><path d="M9 4.500a2.500 2.500 0 0 1 5 0c0 1 2 1.500 3.500 1.500 2 0 2 2 2 4 0 1-1 1.500-2 1.500a2.500 2.500 0 0 0 0 5c1 0 2 .5 2 1.500 0 1.500-1 2.500-3 2.500h-3c-1 0-1-1-1.500-2a2.200 2.200 0 0 0-4 0C8 19.500 8 21 7 21H5.500C4 21 3.500 19.500 3.500 18v-2.500c1.500 0 3-1 3-2.500s-2-2-3-3c-.5-2 .5-4 2.500-4h1.500C8.500 6 9 5.500 9 4.500z" /></Line>
          </ToolIcon>
          <ToolIcon>
            <Line sw={1.600}><rect x="2.500" y="3.500" width="19" height="17" rx="2" /><path d="M15.500 3.500h4a2 2 0 0 1 2 2v13a2 2 0 0 1-2 2h-4z" fill="currentColor" /></Line>
          </ToolIcon>
          <ToolIcon>
            <Line sw={1.600}><path d="M3 7V5.500a2 2 0 0 1 2-2h13a2 2 0 0 1 2 2V7" /><rect x="3" y="7" width="18" height="14" rx="2" /><path d="M21 11h-6a2 2 0 0 0 0 5h6" /></Line>
          </ToolIcon>
          <ToolIcon>
            <Line sw={1.600}><path d="M11 2.500c1.500 5 3 6.500 9 8-6 1.500-7.500 3-9 9-1.500-6-3-7.500-8.500-9 5.500-1.500 7-3 8.500-8z" /><path d="M19 17v5M16.500 19.500h5" strokeWidth="2" /></Line>
          </ToolIcon>
          <ToolIcon>
            <Line sw={1.500}><path d="M12 2c3 2 6 2.500 8 2.500V12c0 5-4 8.500-8 10-4-1.500-8-5-8-10V4.500C6 4.500 9 4 12 2z" /><path d="M8 10.500a5.500 5.500 0 0 1 8 0M9.800 13a3 3 0 0 1 4.400 0" /><circle cx="12" cy="15.500" r=".7" fill="currentColor" /></Line>
          </ToolIcon>
          <ToolIcon><Avatar /></ToolIcon>
          <ToolIcon>
            <Line sw={1.500}><path d="M2 5h20M2 12h20M2 19h20" /></Line>
          </ToolIcon>
        </ToolIcons>
      </Toolbar>

      <BookmarksBar>
        <Line size={22} sw={1.500}>
          <rect x="3" y="3" width="7" height="7" rx="2.500" />
          <rect x="13" y="3" width="7" height="7" rx="2.500" />
          <rect x="3" y="13" width="7" height="7" rx="2.500" />
          <rect x="13" y="13" width="7" height="7" rx="2.500" />
        </Line>
        <BookmarkHint>For quick access, place your bookmarks here on the bookmarks bar.</BookmarkHint>
        <ImportLink>Import bookmarks now...</ImportLink>
        <AllBookmarks>
          <BarDivider />
          <Folder />
          All Bookmarks
        </AllBookmarks>
      </BookmarksBar>

      <Page>
        <Heading>Customer Segmentation (K-Means Clustering)</Heading>
        <Columns>
          <Well>
            <FieldLabel>Number of Clusters (K):</FieldLabel>
            <NumberInput>5</NumberInput>
            <RunButton>Run Clustering</RunButton>
          </Well>
          <div>
            <TabNav>
              <TabLink $active>Income vs Score</TabLink>
              <TabLink>Elbow Method</TabLink>
              <TabLink>K-Means Clusters</TabLink>
              <TabLink>Age Distribution</TabLink>
              <TabLink>Cluster Sizes</TabLink>
            </TabNav>
            <Plot />
          </div>
        </Columns>
      </Page>

      <Taskbar>
        <Weather>
          <WeatherIcon>
            <WaterDrop />
            <WeatherBadge>2</WeatherBadge>
          </WeatherIcon>
          <WeatherText>
            <div>Very humid</div>
            <MutedLine>Now</MutedLine>
          </WeatherText>
        </Weather>
        <Slot><WinLogo /></Slot>
        <SearchPill>
          <Line size={22} sw={1.500}><circle cx="10.500" cy="10.500" r="7" /><path d="M15.500 15.500 21 21" /></Line>
          Search
          <SearchArt><SearchArtwork /></SearchArt>
        </SearchPill>
        <Slot><TaskView /></Slot>
        <Slot><Copilot /></Slot>
        <Slot><ExplorerIcon /><RunDot /></Slot>
        <Slot><StoreIcon /><CountBadge>1</CountBadge></Slot>
        <Slot><DiamondIcon /></Slot>
        <Slot><HelpDisc>?</HelpDisc><HelpDot /></Slot>
        <Slot><McAfee /></Slot>
        <Slot><TelegramIcon /></Slot>
        <Slot><ChromeIcon /></Slot>
        <Slot><EdgeIcon /></Slot>
        <Slot $active><BraveLogo size={30} /><ProfileDot /><RunDot $active /></Slot>
        <Slot><VsCode /><RunDot /></Slot>
        <Slot><RDisc>R</RDisc><RunDot /></Slot>
        <Slot><GitExt /><RunDot /></Slot>
        <Tray>
          <TrayIcon $w={52}><Line size={22} sw={1.800}><path d="M6 15l6-6 6 6" /></Line></TrayIcon>
          <TrayIcon $w={27}>
            <svg width="22" height="14" viewBox="0 0 22 14"><path d="M5 14a4.500 4.500 0 0 1-.5-9 6 6 0 0 1 11-1 5 5 0 0 1 2.500 10z" fill="#d8d8d8" /></svg>
          </TrayIcon>
          <Lang><div>ENG</div><div>IN</div></Lang>
          <TrayIcon $w={24}>
            <Line size={22} sw={1.500}><path d="M2 9.500a14 14 0 0 1 20 0M5.500 13a9 9 0 0 1 13 0M9 16.500a4 4 0 0 1 6 0" /><circle cx="12" cy="19.500" r=".8" fill="currentColor" /></Line>
          </TrayIcon>
          <TrayIcon $w={36}>
            <Line size={24} sw={1.300}><path d="M3 9.500h3.500L11 5.500v13l-4.500-4H3zM14.500 9a4 4 0 0 1 0 6M17 6.500a8 8 0 0 1 0 11" /></Line>
          </TrayIcon>
          <TrayIcon $w={24}>
            <svg width="20" height="14" viewBox="0 0 20 14" fill="none" stroke="currentColor"><rect x=".7" y="1" width="16" height="12" rx="3" strokeWidth="1.400" /><rect x="3" y="3.300" width="9" height="7.400" rx="1" fill="currentColor" stroke="none" /><path d="M18.500 5.500v3" strokeWidth="1.600" /></svg>
          </TrayIcon>
          <Clock><div>08:08</div><div>09-06-2025</div></Clock>
        </Tray>
      </Taskbar>
    </Screen>
  </>
);

export default App;
